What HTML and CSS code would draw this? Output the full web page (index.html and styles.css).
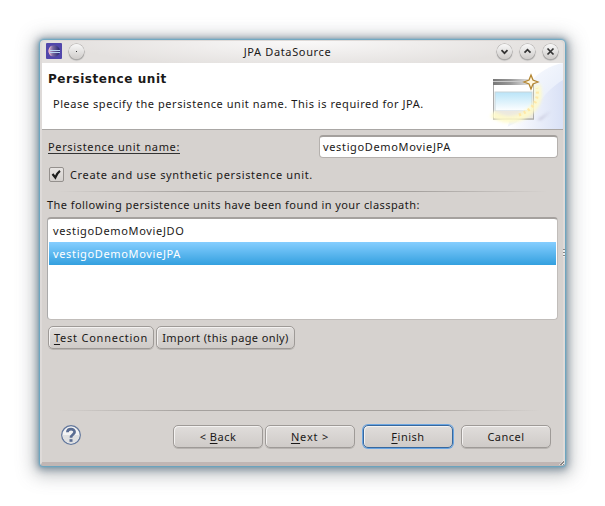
FILE: index.html
```html
<!DOCTYPE html>
<html lang="en">
<head>
<meta charset="utf-8">
<title>JPA DataSource</title>
<link rel="stylesheet" href="styles.css">
</head>
<body>
<main class="window">
  <header class="titlebar">
    <svg class="app-icon" width="16" height="16" viewBox="0 0 16 16">
      <defs><linearGradient id="moon"><stop offset="0" stop-color="#e8b8d8"/><stop offset=".4" stop-color="#74659e"/><stop offset="1" stop-color="#25256e"/></linearGradient></defs>
      <rect width="16" height="16" rx="1" fill="#5146ab"/>
      <circle cx="8.2" cy="8" r="5.7" fill="url(#moon)"/>
      <path d="M6 2.600A6 6 0 0 0 6 13.400A7 7 0 0 1 6 2.600" fill="#efb9c7"/>
      <path d="M4 7.500h10M4 9.500h10" stroke="#b9d4f2" stroke-width="1"/>
    </svg>
    <span class="round pin"><i></i></span>
    <span class="title">JPA DataSource</span>
    <span class="round"><svg width="15" height="15" viewBox="0 0 15 15"><path d="M4.5 6.2l3 3 3-3"/></svg></span>
    <span class="round"><svg width="15" height="15" viewBox="0 0 15 15"><path d="M4.5 8.7l3-3 3 3"/></svg></span>
    <span class="round"><svg width="15" height="15" viewBox="0 0 15 15"><path d="M4.5 4.5l6 6M10.5 4.5l-6 6"/></svg></span>
  </header>
  <section class="banner">
    <div class="banner-text">
      <h1>Persistence unit</h1>
      <p class="t-desc">Please specify the persistence unit name. This is required for JPA.</p>
    </div>
    <svg class="art" width="80" height="66" viewBox="0 0 80 66">
      <defs>
        <linearGradient id="sweep" x1="0" y1="0" x2="1" y2="0"><stop offset=".15" stop-color="#fff"/><stop offset="1" stop-color="#d9e1f6"/></linearGradient>
        <linearGradient id="sweep2" x1="0" y1="0" x2="1" y2="1"><stop offset="0" stop-color="#fff"/><stop offset="1" stop-color="#dde6f8"/></linearGradient>
        <linearGradient id="bar"><stop offset="0" stop-color="#777"/><stop offset=".5" stop-color="#999"/><stop offset="1" stop-color="#ddd"/></linearGradient>
        <linearGradient id="pane" x1="0" y1="0" x2="0" y2="1"><stop offset="0" stop-color="#b9e4f8"/><stop offset="1" stop-color="#fff"/></linearGradient>
        <filter id="soft" x="-30%" y="-30%" width="160%" height="160%"><feGaussianBlur stdDeviation="1.4"/></filter>
      </defs>
      <path d="M24 66C36 25 54 5 80 0V66Z" fill="url(#sweep2)"/>
      <path d="M15 66C45 62 57 30 80 17V66Z" fill="url(#sweep)"/>
      <path d="M18 57H54L68 48L58 57Z" fill="#8d86a8" opacity=".4" filter="url(#soft)"/>
      <rect x="10.500" y="18" width="40" height="38" fill="#fff" stroke="#aaa"/>
      <rect x="10" y="16" width="35" height="6" fill="url(#bar)"/>
      <path d="M10 18.500H40" stroke="#c8c8c8"/>
      <rect x="12" y="29" width="37" height="19" fill="url(#pane)" stroke="#c8d4d8"/>
      <rect x="12" y="48" width="38" height="7" fill="#ece9e0"/>
      <path d="M10 56H51" stroke="#aaa9a0"/>
      <path d="M9 51Q26 61 40 53Q60 42 54 22" fill="none" stroke="#fffbc9" stroke-width="7" opacity=".85" filter="url(#soft)"/>
      <path d="M36 52Q57 44 54 25" fill="none" stroke="#ffe8a6" stroke-width="3" stroke-dasharray="2 3"/>
      <path d="M48 12L50 17L55 19L50 21L48 26L46 21L41 19L46 17Z" fill="#fff7df" stroke="#b48632" stroke-width="1.300"/>
    </svg>
  </section>
  <section class="content">
    <div class="name-row"><label class="t-name">Persistence unit name:</label><div class="field"><span class="t-unit">vestigoDemoMovieJPA</span></div></div>
    <div class="check-row"><span class="check"><svg width="15" height="15" viewBox="0 0 15 15"><path d="M3.500 7L6.300 10.500Q8 6 11 3.800" fill="none" stroke="#1d1d1d" stroke-width="2.200"/></svg></span><span class="t-create">Create and use synthetic persistence unit.</span></div>
    <div class="rule"></div>
    <div class="found t-found">The following persistence units have been found in your classpath:</div>
    <div class="list">
      <div class="item"><span class="t-unit">vestigoDemoMovieJDO</span></div>
      <div class="item selected"><span class="t-unit">vestigoDemoMovieJPA</span></div>
    </div>
    <div class="tools">
      <div class="btn test"><span class="t-test"><u>T</u>est Connection</span></div>
      <div class="btn import"><span class="t-import">Import (this page only)</span></div>
    </div>
  </section>
  <footer>
    <div class="rule"></div>
    <div class="actions">
      <svg class="help" width="20" height="20" viewBox="0 0 20 20">
        <circle cx="10" cy="10" r="9.300" fill="#f3f3f3" stroke="#62779c" stroke-width="1.300"/>
        <path d="M1.500 10a8.500 8.500 0 0 0 17 0Z" fill="#dfe0e1"/>
        <path d="M6.400 7.200C6.500 3.200 13.600 3.200 13.600 7C13.600 9.600 10 9.400 10 12.700" fill="none" stroke="#596c92" stroke-width="2.700"/>
        <rect x="8.500" y="14.200" width="3" height="2.600" fill="#596c92"/>
      </svg>
      <div class="btn wide"><span>&lt; <u>B</u>ack</span></div>
      <div class="btn wide"><span class="t-next"><u>N</u>ext &gt;</span></div>
      <div class="btn wide primary"><span><u>F</u>inish</span></div>
      <div class="btn wide"><span>Cancel</span></div>
    </div>
  </footer>
  <span class="splitter"></span>
  <span class="grip"></span>
</main>
</body>
</html>
```
FILE: styles.css
```css
* { box-sizing: border-box; }
body {
  margin: 0;
  padding: 40px;
  width: 605px;
  height: 506px;
  overflow: hidden;
  background: #fff;
  color: #1b1918;
  font: 11px/15px "Noto Sans", sans-serif;
  letter-spacing: .5px;
}
.window {
  position: relative;
  width: 525px;
  height: 426px;
  display: flex;
  flex-direction: column;
  border: solid #dedad8;
  border-width: 1px 2px 4px;
  border-bottom-color: #c0b6b4;
  border-radius: 4px 4px 3px 3px;
  background: #d6d2cf;
  box-shadow: 0 0 2px 1px rgba(90, 165, 200, .9), 0 1px 7px 3px rgba(85, 110, 130, .6), 0 3px 17px 7px rgba(95, 100, 105, .36);
}
.titlebar {
  height: 22px;
  display: flex;
  align-items: center;
  padding: 0 5px 2px 4px;
  border-radius: 3px 3px 0 0;
  background: radial-gradient(ellipse 240px 26px at 50% 0, #faf9f9, #e4e1df);
}
.title { flex: 1; text-align: center; padding-left: 2px; letter-spacing: .65px; }
.round {
  width: 15px;
  height: 15px;
  margin-left: 8px;
  border-radius: 50%;
  background: linear-gradient(#f8f8f8, #cfccca);
  box-shadow: 0 0 0 .5px #aaa7a5, 0 1px 1px .5px #aaa;
  display: grid;
  place-items: center;
}
.round svg { display: block; fill: none; stroke: #333; stroke-width: 1.7; }
.round.pin { margin-left: 7px; }
.pin i { width: 1px; height: 1px; background: #333; }
.banner {
  height: 67px;
  display: flex;
  justify-content: space-between;
  background: #fff;
  border-bottom: 1px solid #aaa7a5;
}
.banner-text { padding: 9px 0 0 6px; }
h1 { margin: 0; font: bold 12px/15px "DejaVu Sans", sans-serif; letter-spacing: .1px; }
p { margin: 9px 0 0 5px; }
h1 { letter-spacing: .55px; }
.t-desc { letter-spacing: .545px; }
.t-name, .t-unit, .t-create { letter-spacing: .65px; }
.t-found { letter-spacing: .44px; }
.t-test { letter-spacing: .77px; }
.t-import { letter-spacing: .38px; }
.t-next { letter-spacing: .8px; }
.content { height: 222px; padding: 5px 5px 0; }
.name-row { display: flex; justify-content: space-between; height: 23px; align-items: center; }
.name-row label { margin-left: 1px; border-bottom: 1px solid #333; line-height: 13px; }
.field {
  width: 239px;
  height: 23px;
  padding: 2px 3px;
  border: 1px solid #b5b1ae;
  border-top: 2px solid #a4a09d;
  border-radius: 4px;
  background: #fff;
}
.check-row { display: flex; gap: 6px; align-items: center; height: 16px; margin: 8px 0 9px 2px; }
.check { width: 15px; height: 15px; border: 1px solid #94908d; border-radius: 2px; background: linear-gradient(#e8e5e3, #d4d0cd); }
.check svg { display: block; margin: -1px; }
.rule { height: 1px; background: linear-gradient(90deg, transparent 2%, #a5a19e 28%, #a5a19e 72%, transparent 98%); }
.found { height: 25px; padding-top: 5px; }
.list {
  height: 103px;
  border: 1px solid #c1bdba;
  border-top: 2px solid #a5a19e;
  border-left-color: #aaa;
  border-radius: 4px;
  background: #fff;
  padding-right: 1px;
  padding-left: 1px;
  overflow: hidden;
}
.item { height: 23px; padding: 4px 4px; }
.selected { background: linear-gradient(#85ceff, #34a0df); color: #fff; }
.tools { display: flex; gap: 2px; padding: 6px 0 0 1px; }
.btn {
  height: 23px;
  border: 1px solid #9e9a97;
  border-radius: 5px;
  background: linear-gradient(#e0dddb, #cfcbc8);
  box-shadow: inset 1px 1px 0 #f4f2f1, 0 1px 0 #b8b4b1;
  display: flex;
  align-items: center;
  justify-content: center;
}
.btn u { text-underline-offset: 2px; }
.test { width: 106px; }
.import { width: 139px; }
footer { margin-top: auto; height: 52px; padding: 0 12px 0 5px; }
.actions { display: flex; padding-top: 14px; }
.help { margin: 0 92px 0 14px; }
.wide { width: 90px; margin-right: 2px; }
.wide:nth-of-type(2) { margin-right: 8px; }
.primary { margin-right: 8px; border-color: #37689e; box-shadow: inset 1px 1px 0 #f4f2f1, 0 0 0 1px #6ba5e1; }
.wide:last-child { margin-right: 0; }
.splitter {
  position: absolute;
  right: -2px;
  top: 208px;
  width: 2px;
  height: 8px;
  background: repeating-linear-gradient(#8c8886 0 1px, #eee 1px 3px);
}
.grip {
  position: absolute;
  right: -1px;
  bottom: -3px;
  width: 5px;
  height: 5px;
  background: repeating-linear-gradient(135deg, #8a8684 0 1px, #f4f4f4 1px 2px);
  clip-path: polygon(100% 0, 100% 100%, 0 100%);
}
```
